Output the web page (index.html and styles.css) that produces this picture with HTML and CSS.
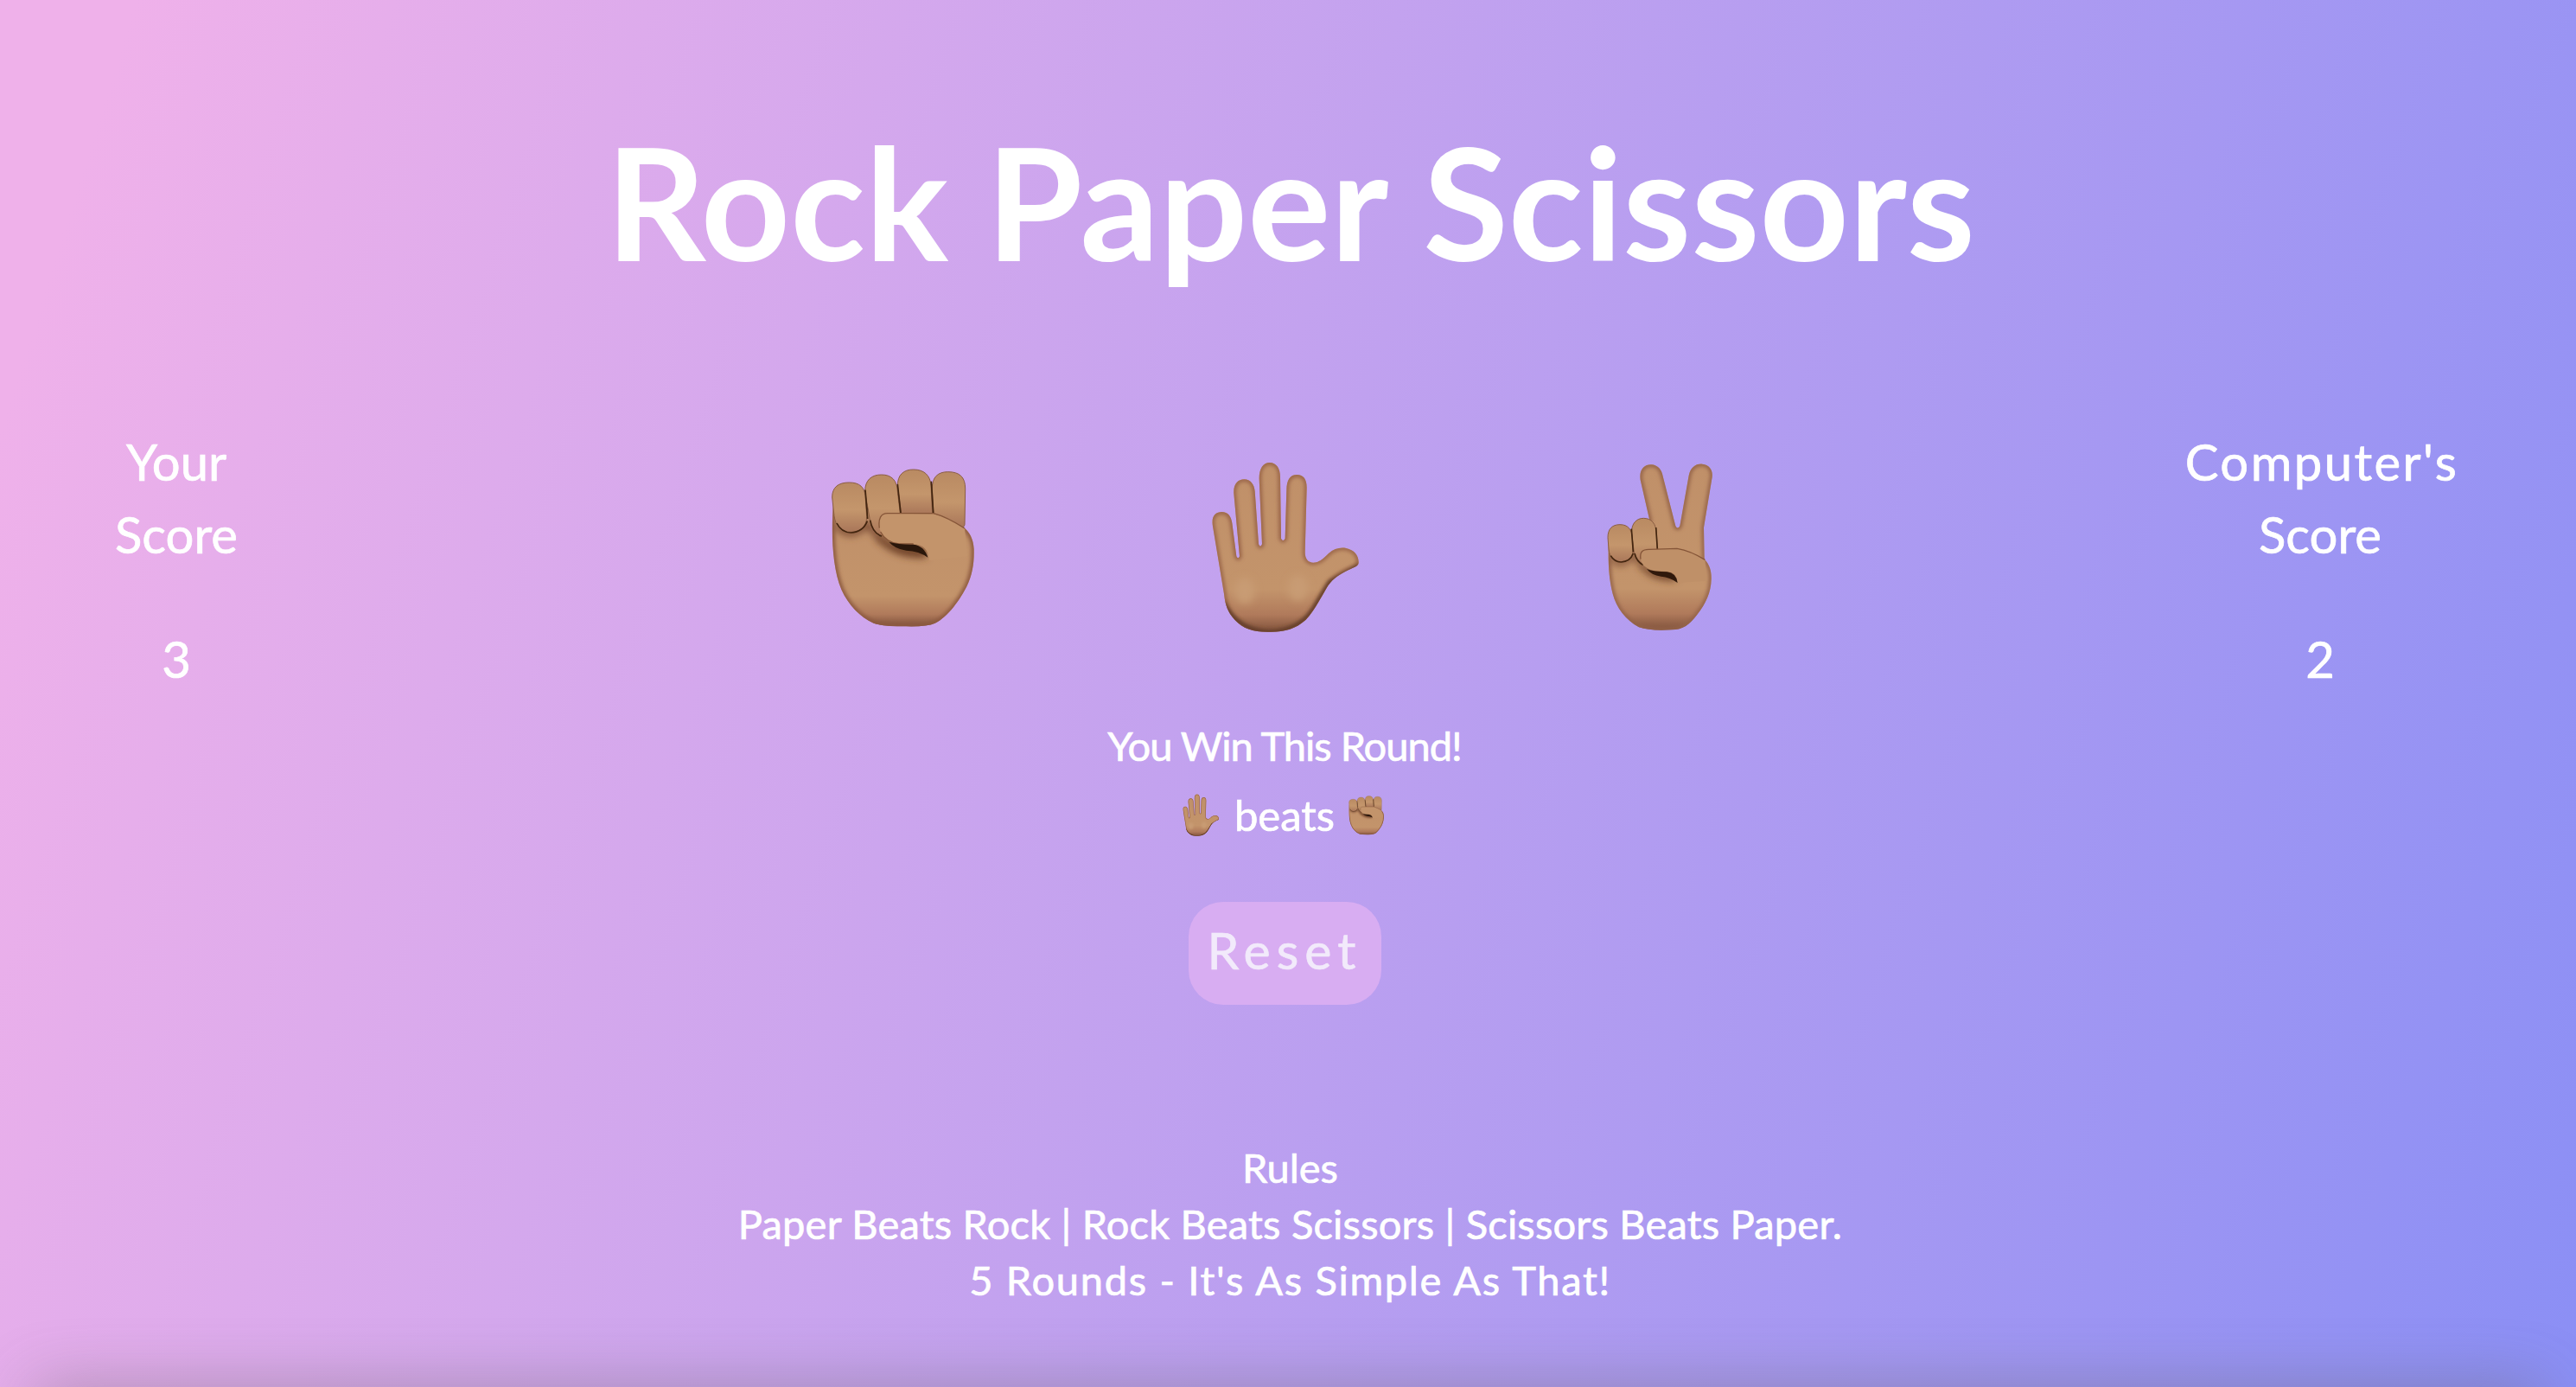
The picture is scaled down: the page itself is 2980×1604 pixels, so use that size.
FILE: index.html
```html
<!DOCTYPE html>
<html lang="en">
<head>
<meta charset="utf-8">
<title>Rock Paper Scissors</title>
<link rel="stylesheet" href="styles.css">
</head>
<body>
<svg class="defs" aria-hidden="true">
  <defs>
    <linearGradient id="skin" x1="0" y1="0" x2="0" y2="1">
      <stop offset="0" stop-color="#c09069"/><stop offset=".75" stop-color="#c3946b"/><stop offset=".9" stop-color="#b07a5b"/><stop offset="1" stop-color="#80523c"/>
    </linearGradient>
    <linearGradient id="finger" x1="0" y1="0" x2="0" y2="1">
      <stop offset="0" stop-color="#b98a62"/><stop offset=".55" stop-color="#c4966c"/><stop offset="1" stop-color="#a97659"/>
    </linearGradient>
    <filter id="soft" x="-60%" y="-60%" width="220%" height="220%"><feGaussianBlur stdDeviation="12"/></filter>
    <filter id="edge" x="-20%" y="-20%" width="140%" height="140%"><feGaussianBlur stdDeviation="7"/></filter>
    <path id="fist-palm" d="M132 250C124 345 128 470 160 545C185 600 225 640 272 662Q300 673 385 673Q455 675 485 662C530 642 575 575 595 535C615 492 621 455 620 405C618 370 605 345 582 328L480 270L250 270Z"/>
    <path id="palm-shape" d="M128 320C124 290 140 276 160 276C182 276 193 292 196 315L211 430Q217 442 222 430L202 212C200 180 216 163 238 163C260 163 273 180 275 205L288 388Q294 402 300 388L290 160C290 125 304 105 326 105C350 105 363 125 363 155L366 368Q373 382 380 368L385 200C385 165 397 147 421 147C445 147 456 164 455 195L449 415C449 440 460 452 478 452C500 452 515 435 531 420C550 404 570 398 592 402C620 408 636 428 635 452C635 465 615 469 590 482C560 498 540 512 524 540C495 590 480 620 452 650C415 683 375 693 325 692C270 693 235 682 205 650C180 622 172 598 168 560Z"/>
    <path id="peace-hand" d="M325 305L293 165C288 130 305 112 330 112C354 113 367 130 371 152L415 325Q422 338 430 325L461 150C467 122 485 108 508 110C532 112 545 130 542 155L513 330L515 440C535 460 540 485 539 510C538 555 520 595 490 632C462 668 442 684 400 685Q330 690 288 676C242 650 210 610 197 560C184 510 181 460 182 390L270 330Z"/>
    <clipPath id="fist-clip"><use href="#fist-palm"/></clipPath>
    <clipPath id="palm-clip"><use href="#palm-shape"/></clipPath>
    <clipPath id="peace-clip"><use href="#peace-hand"/></clipPath>
    <symbol id="rock" viewBox="0 0 780 780">
      <path d="M240 200L260 340Q270 360 310 360L560 320V250L475 180L355 190Z" fill="#3f2615"/>
      <use href="#fist-palm" fill="url(#skin)"/>
      <g clip-path="url(#fist-clip)">
        <use href="#fist-palm" fill="none" stroke="#8d5a40" stroke-width="18" filter="url(#edge)"/>
        <path d="M140 320Q190 380 250 318L300 375" fill="none" stroke="#7a4c34" stroke-width="22" filter="url(#soft)"/>
        <path d="M290 350Q340 400 455 400V435Q350 440 290 380Z" fill="#6d3f28" filter="url(#soft)"/>
      </g>
      <g fill="url(#finger)" stroke="#8a5d42" stroke-width="3">
        <path d="M475 195C475 155 495 137 530 137C570 137 590 155 590 195L588 320Q585 333 575 327L480 282Z"/>
        <path d="M355 185C355 148 375 129 410 129C448 129 469 150 471 185L476 284H368Z"/>
        <path d="M242 205C242 165 265 147 299 147C335 147 353 167 355 205L365 290L300 358Q270 350 260 310Z"/>
        <path d="M128 225C128 190 150 174 187 174C225 174 240 192 243 220L248 292C248 328 225 346 193 346C162 346 140 328 135 290Z"/>
      </g>
      <path d="M144 315Q160 347 193 348Q235 346 250 308M260 305Q268 350 300 360M243 200L251 300M355 180L366 280M472 170L479 280" fill="none" stroke="#42250f" stroke-width="5"/>
      <path d="M290 320C288 292 295 282 320 281L480 283C515 292 555 310 588 334L597 430L465 445C462 408 445 388 410 388L355 386C318 380 294 356 290 320Z" fill="#c3946b"/>
      <path d="M296 345C310 372 330 384 360 387H410M292 332Q285 282 320 281H480Q525 293 588 333" fill="none" stroke="#855538" stroke-width="4"/>
      <path d="M325 380Q360 390 410 389Q448 394 460 434Q430 412 385 410Q345 404 325 380Z" fill="#2a170b"/>
    </symbol>
    <symbol id="paper" viewBox="0 0 780 780">
      <use href="#palm-shape" fill="url(#skin)"/>
      <g clip-path="url(#palm-clip)">
        <use href="#palm-shape" fill="none" stroke="#9a6548" stroke-width="16" filter="url(#edge)"/>
        <path d="M165 590Q215 690 325 692Q430 690 480 610L535 520L640 462" fill="none" stroke="#5b3825" stroke-width="14" filter="url(#edge)"/>
        <ellipse cx="240" cy="550" rx="35" ry="45" fill="#c89b73" filter="url(#soft)"/>
        <ellipse cx="425" cy="540" rx="35" ry="45" fill="#c89b73" filter="url(#soft)"/>
      </g>
    </symbol>
    <symbol id="scissors" viewBox="0 0 780 780">
      <use href="#peace-hand" fill="url(#skin)"/>
      <g clip-path="url(#peace-clip)">
        <use href="#peace-hand" fill="none" stroke="#94634a" stroke-width="16" filter="url(#edge)"/>
        <path d="M185 430Q225 480 268 425L305 465" fill="none" stroke="#7a4c34" stroke-width="16" filter="url(#soft)"/>
        <path d="M295 450Q330 490 415 490V515Q330 515 295 470Z" fill="#6d3f28" filter="url(#soft)"/>
      </g>
      <g fill="url(#finger)" stroke="#8a5d42" stroke-width="3">
        <path d="M262 350C262 315 280 298 304 298C332 298 347 317 349 350L352 410L300 460Q275 445 271 415Z"/>
        <path d="M180 365C180 335 195 320 222 320C250 320 263 337 265 365L268 410C266 438 247 450 224 450C200 450 186 435 183 405Z"/>
      </g>
      <path d="M190 428Q203 450 226 450Q258 448 268 420M273 420Q280 448 302 460M262 335L268 415M347 330L352 405" fill="none" stroke="#42250f" stroke-width="5"/>
      <path d="M294 440C290 415 300 405 325 406L420 403C450 408 485 422 517 442L524 515L422 522C420 495 406 484 385 483L350 481C316 477 297 460 294 440Z" fill="#bf9068"/>
      <path d="M294 440C290 415 300 405 325 406L420 403C450 408 485 422 517 442" fill="none" stroke="#855538" stroke-width="4"/>
      <path d="M315 474Q340 484 385 484Q418 488 422 522Q395 502 365 500Q330 495 315 474Z" fill="#30190c"/>
    </symbol>
  </defs>
</svg>
<main class="game">
  <h1 class="title">Rock Paper Scissors</h1>
  <section class="board">
    <div class="score score-you"><h2>Your<br>Score</h2><p>3</p></div>
    <div class="choices">
      <svg class="choice" role="img" aria-label="Rock"><use href="#rock"/></svg>
      <svg class="choice" role="img" aria-label="Paper"><use href="#paper"/></svg>
      <svg class="choice" role="img" aria-label="Scissors"><use href="#scissors"/></svg>
    </div>
    <div class="score score-computer"><h2><span class="computer">Computer's</span><br>Score</h2><p>2</p></div>
  </section>
  <section class="result">
    <p class="outcome">You Win This Round!</p>
    <p class="detail"><svg class="mini" role="img" aria-label="Paper"><use href="#paper"/></svg><span>beats</span><svg class="mini" role="img" aria-label="Rock"><use href="#rock"/></svg></p>
    <button class="reset">Reset</button>
  </section>
  <footer class="rules">
    <h3>Rules</h3>
    <p class="beats">Paper Beats Rock | Rock Beats Scissors | Scissors Beats Paper.</p>
    <p class="rounds">5 Rounds - It's As Simple As That!</p>
  </footer>
</main>
</body>
</html>
```
FILE: styles.css
```css
* { box-sizing: border-box; margin: 0; padding: 0; }
body {
  position: relative;
  height: 1604px;
  overflow: hidden;
  color: #fff;
  font-family: Lato, "Open Sans", sans-serif;
  background: linear-gradient(107.5deg, #efb1ea 4.5%, #8b8ff5 100%);
}
/* soft shade along the bottom edge */
body::after {
  content: "";
  position: absolute;
  left: 40px;
  right: 40px;
  top: 100%;
  height: 60px;
  box-shadow: 0 0 72px rgba(100, 95, 90, .42);
}
.defs { position: absolute; width: 0; height: 0; }
.game { height: 1604px; display: flex; flex-direction: column; padding-top: 132px; }
h1, h2, h3, p { font-weight: 400; white-space: nowrap; }
.title { height: 368px; font-size: 180px; line-height: 200px; font-weight: 700; letter-spacing: 0; text-align: center; padding-left: 6px; }
.board { height: 320px; display: flex; }
.score { width: 408px; margin-top: -8px; text-align: center; font-size: 58px; }
.score, .result, .rules { -webkit-text-stroke: .7px currentColor; }
.score h2 { font-size: inherit; line-height: 84px; }
.score p { line-height: 84px; margin-top: 60px; }
.score-computer { width: 592px; margin-left: auto; }
.computer { letter-spacing: 2.4px; margin-right: -4px; }
.choices { display: flex; gap: 180px; margin-left: 512px; }
.choice { width: 260px; height: 260px; }
.result { height: 498px; display: flex; flex-direction: column; align-items: center; padding-right: 8px; }
.outcome { height: 82px; font-size: 47px; line-height: 84px; letter-spacing: -1px; }
.detail { display: flex; align-items: center; gap: 6px; height: 80px; font-size: 49px; }
.mini { width: 64px; height: 64px; }
.reset { margin-top: 61px; width: 223px; height: 119px; border: 0; border-radius: 40px; background: #d8adf2; color: #f2eafb; font: 400 59px Lato, sans-serif; letter-spacing: 7px; padding: 0 0 8px; }
.rules { text-align: center; font-size: 47px; line-height: 65px; padding-left: 5px; }
.rules h3 { font-size: inherit; }
.beats { letter-spacing: .2px; }
.rounds { letter-spacing: 1.7px; }
```
